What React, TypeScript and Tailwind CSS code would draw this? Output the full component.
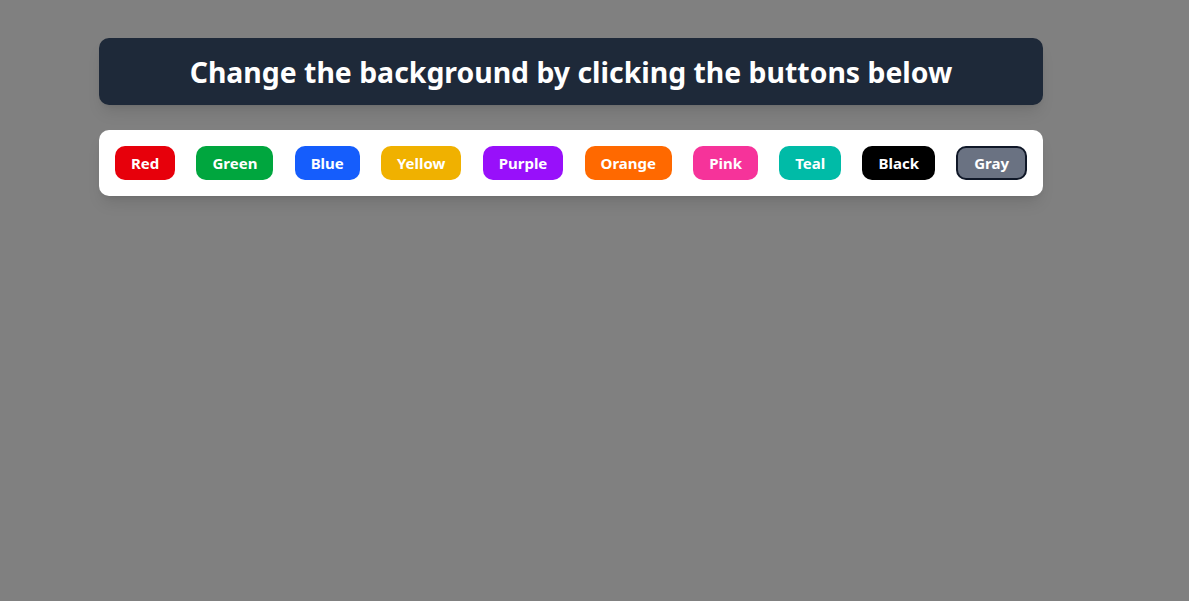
const COLORS = [
  { name: 'Red', cls: 'bg-[#e7000b]' },
  { name: 'Green', cls: 'bg-[#00a63e]' },
  { name: 'Blue', cls: 'bg-[#155dfc]' },
  { name: 'Yellow', cls: 'bg-[#f0b100]' },
  { name: 'Purple', cls: 'bg-[#9810fa]' },
  { name: 'Orange', cls: 'bg-[#ff6900]' },
  { name: 'Pink', cls: 'bg-[#f6339a]' },
  { name: 'Teal', cls: 'bg-[#00bba7]' },
  { name: 'Black', cls: 'bg-black' },
  { name: 'Gray', cls: 'bg-[#6a7282] border-2 border-[#101828]' },
];

export default function App() {
  return (
    <div className="min-h-[601px] bg-[#808080] pt-[38px] pl-[99px] font-['Noto_Sans',sans-serif]">
      <div className="w-[944px]">
        <div className="h-[67px] rounded-[10px] bg-[#1e2939] shadow-lg flex items-center justify-center pt-[2px]">
          <h1 className="text-[28.4px] font-bold text-white">Change the background by clicking the buttons below</h1>
        </div>
        <div className="mt-[25px] h-[66px] rounded-[10px] bg-white shadow-lg flex items-center justify-between px-4">
          {COLORS.map((c) => (
            <button
              key={c.name}
              className={`h-[34px] px-4 rounded-[10px] text-white font-bold text-[15px] ${c.cls}`}
            >
              {c.name}
            </button>
          ))}
        </div>
      </div>
    </div>
  );
}
